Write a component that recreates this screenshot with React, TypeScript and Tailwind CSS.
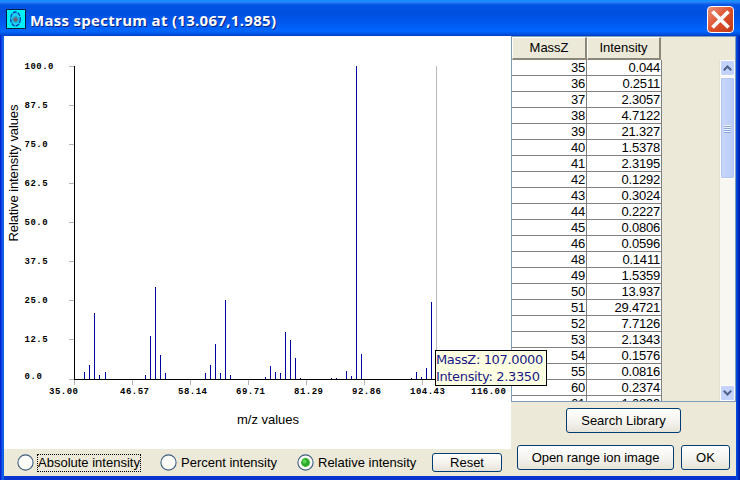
import React, { useState } from 'react';

type Mode = 'absolute' | 'percent' | 'relative';

const modes: { id: Mode; label: string; className: string }[] = [
  { id: 'absolute', label: 'Absolute intensity', className: 'ml-[13px] w-[143px]' },
  { id: 'percent', label: 'Percent intensity', className: 'w-[137px]' },
  { id: 'relative', label: 'Relative intensity', className: 'w-[135px]' },
];

const rows: [string, string][] = [
  ['35', '0.044'],
  ['36', '0.2511'],
  ['37', '2.3057'],
  ['38', '4.7122'],
  ['39', '21.327'],
  ['40', '1.5378'],
  ['41', '2.3195'],
  ['42', '0.1292'],
  ['43', '0.3024'],
  ['44', '0.2227'],
  ['45', '0.0806'],
  ['46', '0.0596'],
  ['48', '0.1411'],
  ['49', '1.5359'],
  ['50', '13.937'],
  ['51', '29.4721'],
  ['52', '7.7126'],
  ['53', '2.1343'],
  ['54', '0.1576'],
  ['55', '0.0816'],
  ['60', '0.2374'],
  ['61', '1.0299'],
];

// [x, top] of every peak, in chart pixels
const peaks = [
  [80, 336], [85, 329], [90, 277], [95, 339], [101, 336],
  [141, 339], [146, 300], [151, 251], [156, 319], [161, 337],
  [201, 337], [206, 329], [211, 308], [216, 337], [221, 264], [226, 339],
  [261, 341], [266, 330], [271, 336], [276, 337], [281, 296], [286, 304], [291, 322], [296, 342],
  [327, 342], [332, 342], [342, 335], [347, 340], [352, 30], [357, 318],
  [407, 342], [412, 336], [417, 341], [422, 332], [427, 266],
];

const yTicks: [string, number, number][] = [
  ['100.0', 30, 33],
  ['87.5', 69, 72],
  ['75.0', 108, 111],
  ['62.5', 147, 150],
  ['50.0', 186, 189],
  ['37.5', 225, 228],
  ['25.0', 264, 267],
  ['12.5', 303, 306],
  ['0.0', 343, 343],
];

const xTicks: [string, number, number][] = [
  ['35.00', 70, 45],
  ['46.57', 128, 116],
  ['58.14', 186, 174],
  ['69.71', 244, 232],
  ['81.29', 302, 290],
  ['92.86', 360, 348],
  ['104.43', 418, 406],
  ['116.00', 0, 467],
];

function Spectrum() {
  return (
    <svg width="507" height="413" className="block bg-white" shapeRendering="crispEdges">
      {yTicks.map(([label, y, base]) => (
        <g key={label}>
          <rect x="65" y={y} width="5" height="1" fill="#b4b4b4" />
          <text x="20.5" y={base} textLength={label.length * 5.8} className="font-['Liberation_Mono'] text-[9px] font-bold">
            {label}
          </text>
        </g>
      ))}
      {xTicks.map(([label, x, start]) => (
        <g key={label}>
          {x > 0 && <rect x={x} y="344" width="1" height="5" fill="#b4b4b4" />}
          <text x={start} y="358" textLength={label.length * 5.8} className="font-['Liberation_Mono'] text-[9px] font-bold">
            {label}
          </text>
        </g>
      ))}
      <rect x="432" y="30" width="1" height="313" fill="#b8b8b8" />
      {peaks.map(([x, top]) => (
        <rect key={x} x={x} y={top} width="1" height={343 - top} fill="#00009c" />
      ))}
      <rect x="70" y="30" width="1" height="314" fill="#000" />
      <rect x="70" y="343" width="362" height="1" fill="#000" />
      <text transform="translate(14 205.5) rotate(-90)" textLength="137" className="font-['Liberation_Sans'] text-[13px]">
        Relative intensity values
      </text>
      <text x="233" y="388" textLength="62" className="font-['Liberation_Sans'] text-[13px]">
        m/z values
      </text>
    </svg>
  );
}

function Radio({ checked }: { checked: boolean }) {
  return (
    <svg width="17" height="17" viewBox="0 0 17 17" className="shrink-0">
      <circle cx="8.5" cy="8.5" r="7.6" fill="#fbfbf8" stroke="#3d5f80" strokeWidth="1.1" />
      {checked && <circle cx="8.5" cy="8.5" r="4.4" fill="#2cab2a" />}
      {checked && <circle cx="7.5" cy="7.5" r="2" fill="#55d551" />}
    </svg>
  );
}

function Button({ className, children }: { className: string; children: React.ReactNode }) {
  return (
    <button
      className={`flex items-center justify-center whitespace-nowrap rounded-[3px] border border-[#003c74] bg-linear-to-b from-white via-[#f5f4ef] to-[#e6e3d8] ${className}`}
    >
      {children}
    </button>
  );
}

function ScrollArrow({ down }: { down?: boolean }) {
  return (
    <div className="flex h-4 w-[15px] shrink-0 items-center justify-center rounded-[2px] border border-white bg-[#c3d3fd]">
      <svg width="9" height="6" viewBox="0 0 9 6" fill="none" stroke="#4d6185" strokeWidth="2">
        <path d={down ? 'M0.8 0.8 4.5 4.5 8.2 0.8' : 'M0.8 5.2 4.5 1.5 8.2 5.2'} />
      </svg>
    </div>
  );
}

export default function App() {
  const [mode, setMode] = useState<Mode>('relative');

  return (
    <div className="relative flex h-[480px] w-[740px] flex-col overflow-hidden bg-[#0831d9] font-['Liberation_Sans',sans-serif] text-[13px] text-black">
      <div className="flex h-9 shrink-0 items-center bg-[linear-gradient(#0997ff_0,#2a82f5_2px,#0353e4_5px,#0050e0_14px,#0058ee_22px,#0066ff_31px,#0052e0_34px,#003dc8_36px)] pl-[6px] pr-[6px]">
        <svg width="20" height="20" viewBox="0 0 20 20" className="mt-[2px]">
          <rect x="0.5" y="0.5" width="19" height="19" fill="#00f0f8" stroke="#002040" />
          <ellipse cx="9.5" cy="10" rx="4.8" ry="7" fill="#19d4ef" stroke="#0838b8" strokeWidth="1.3" strokeDasharray="4 1" />
          <circle cx="9.5" cy="10.5" r="3" fill="none" stroke="#20a0d8" />
          <circle cx="9.5" cy="10.5" r="2.2" fill="#6b6070" />
        </svg>
        <h1 className="ml-1 mt-[4px] whitespace-nowrap font-['Open_Sans'] text-[15px] font-bold leading-5 tracking-[0.3px] text-white [text-shadow:1px_1px_#0a1f80]">
          Mass spectrum at (13.067,1.985)
        </h1>
        <button className="ml-auto mt-[3px] flex h-[27px] w-[27px] items-center justify-center rounded-[4px] border border-white bg-linear-to-br from-[#e8917a] via-[#dd4f2b] to-[#c03a14]">
          <svg width="19" height="19" viewBox="0 0 19 19" stroke="#fff" strokeWidth="3.8">
            <path d="M1.5 1.5 17.5 17.5M17.5 1.5 1.5 17.5" />
          </svg>
        </button>
      </div>

      <div className="flex min-h-0 flex-1 bg-[linear-gradient(to_right,#0019cf_0,#0831d9_1px,#166aee_3px,#0855dd_4px,#0855dd_736px,#0441d8_737px,#0029bd_739px,#00138c_740px)]">
        <div className="ml-1 w-[507px] border-b-4 border-[#0733d0] bg-[#ece9d8]">
          <Spectrum />
          <div className="flex h-[27px] items-center">
            {modes.map((item) => (
              <button key={item.id} onClick={() => setMode(item.id)} className={`flex shrink-0 items-center ${item.className}`}>
                <Radio checked={mode === item.id} />
                <span
                  className={`ml-[3px] flex h-[18px] items-center whitespace-nowrap border border-dotted ${
                    item.id === 'absolute' ? 'border-black' : 'border-transparent'
                  }`}
                >
                  {item.label}
                </span>
              </button>
            ))}
            <Button className="h-[19px] w-[70px]">Reset</Button>
          </div>
        </div>

        <div className="flex w-[225px] flex-col border-b-4 border-[#0733d0] bg-[#ece9d8]">
          <div className="flex h-[366px] flex-col overflow-hidden border border-[#7f9db9]">
            <div className="flex h-[23px] shrink-0 tracking-[-0.05px]">
              <div className="flex w-[75px] items-center justify-center border-b-2 border-r-2 border-l border-t border-[#8b887b] border-l-white border-t-white">
                MassZ
              </div>
              <div className="flex w-[74px] items-center justify-center border-b-2 border-r-2 border-l border-t border-[#8b887b] border-l-white border-t-white">
                Intensity
              </div>
            </div>
            <div className="flex h-[341px] justify-between overflow-hidden">
              <div>
                {rows.map(([mass, intensity]) => (
                  <div key={mass} className="flex h-4 border-b border-[#808080] bg-white text-right leading-[15px] tracking-[-0.2px]">
                    <div className="w-[75px] border-r border-[#808080] pr-px">{mass}</div>
                    <div className="w-[75px] border-r border-[#808080] pr-px">{intensity}</div>
                  </div>
                ))}
              </div>
              <div className="flex w-[16px] flex-col border-l border-[#e3e0d2] bg-[#f8f7f2]">
                <ScrollArrow />
                <div className="mt-px flex h-[102px] w-[15px] flex-col items-center justify-center gap-px rounded-[2px] border border-white bg-linear-to-r from-[#cad8ff] to-[#b8cafa] shadow-[inset_0_0_0_1px_#b2c5f5]">
                  {[0, 1, 2, 3].map((line) => (
                    <div key={line} className="h-px w-[7px] bg-[#eef3ff] shadow-[0_1px_#8ca6e0]" />
                  ))}
                </div>
                <div className="flex-1" />
                <ScrollArrow down />
              </div>
            </div>
          </div>

          <div className="flex flex-col gap-3 pt-[6px]">
            <Button className="ml-[55px] h-[25px] w-[115px]">Search Library</Button>
            <div className="ml-[6px] flex gap-[7px]">
              <Button className="h-[25px] w-[157px]">
                <span className="tracking-[-0.05px]">Open range ion image</span>
              </Button>
              <Button className="h-[25px] w-[49px]">OK</Button>
            </div>
          </div>
        </div>
      </div>

      <div className="absolute left-[435px] top-[350px] h-9 w-[112px] whitespace-nowrap border border-black bg-[#ffffe1] font-['DejaVu_Sans'] text-[13px] leading-[17px] tracking-[-0.35px] text-[#191989]">
        <div>MassZ: 107.0000</div>
        <div>Intensity: 2.3350</div>
      </div>
    </div>
  );
}
